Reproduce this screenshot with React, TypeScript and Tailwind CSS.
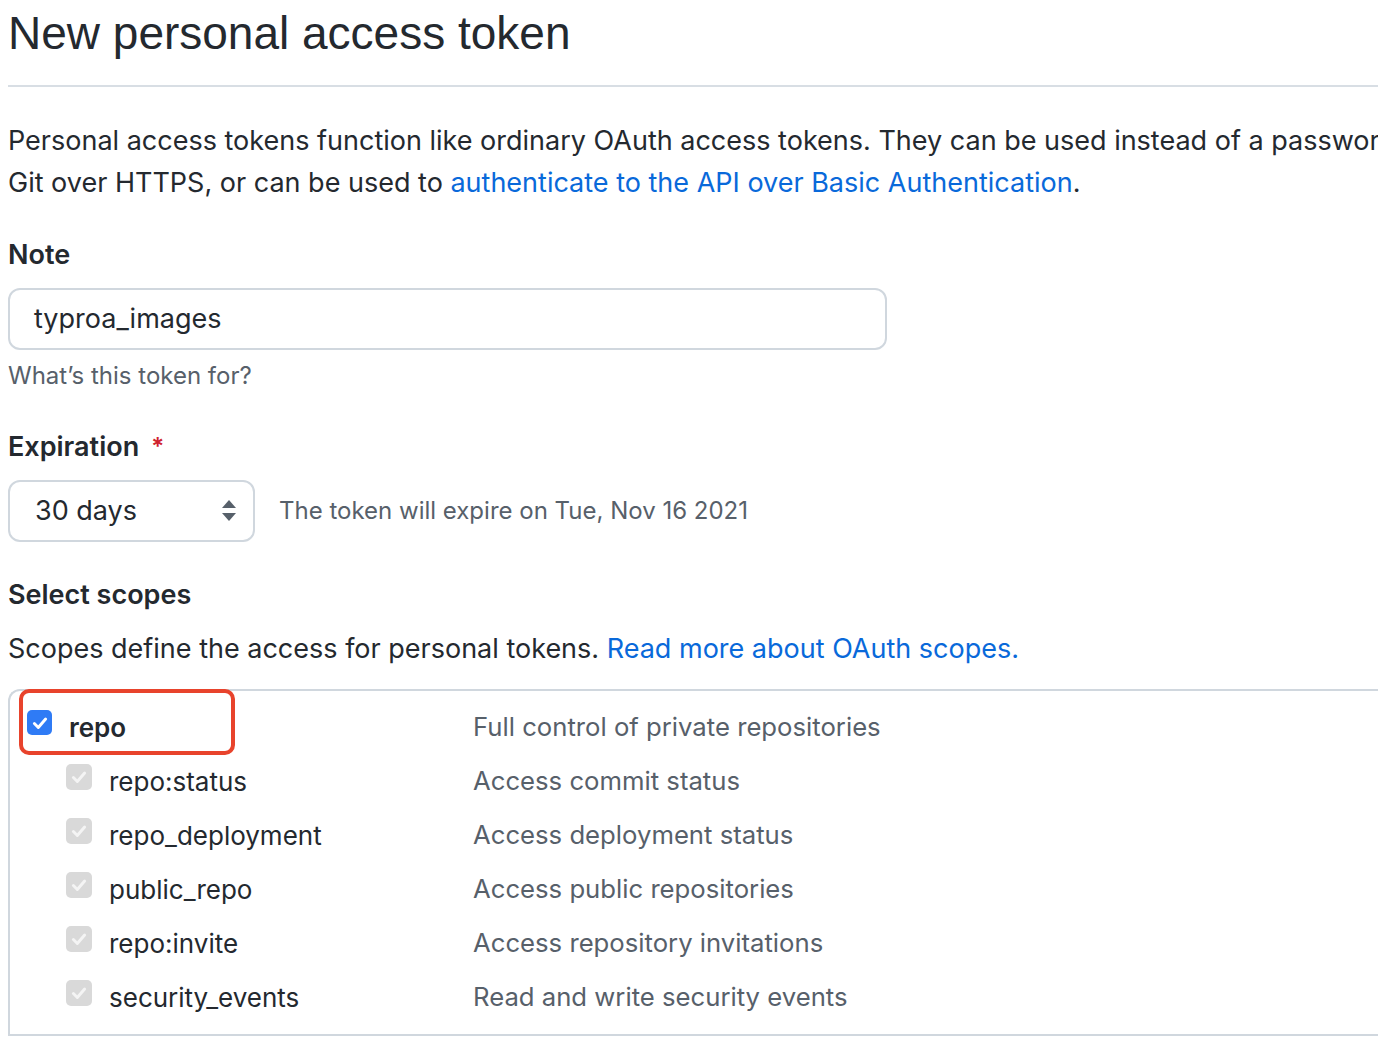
import React from "react";

const Check = ({ color = "white" }: { color?: string }) => (
  <svg viewBox="0 0 16 16" className="w-[18px] h-[18px]">
    <path d="M3 8.5 L6.5 12 L13 4.5" fill="none" stroke={color} strokeWidth="2.6" strokeLinecap="round" strokeLinejoin="round" />
  </svg>
);

const sub = [
  ["repo:status", "Access commit status"],
  ["repo_deployment", "Access deployment status"],
  ["public_repo", "Access public repositories"],
  ["repo:invite", "Access repository invitations"],
  ["security_events", "Read and write security events"],
];

export default function App() {
  return (
    <div className="w-[1378px] h-[1042px] overflow-hidden bg-white text-[#24292f] pl-[8px]" style={{ fontFamily: "Inter, 'Noto Sans', sans-serif" }}>
      <div className="h-[87px] border-b-2 border-[#d8dee4] w-[1370px]">
        <h1 className="text-[46px] leading-[66px] font-normal" style={{ fontFamily: "'Liberation Sans', Arial, sans-serif" }}>
          New personal access token
        </h1>
      </div>
      <p className="mt-[33px] text-[27px] leading-[42px] whitespace-nowrap">
        Personal access tokens function like ordinary OAuth access tokens. They can be used instead of a password for
        <br />
        Git over HTTPS, or can be used to <span className="text-[#0969da]">authenticate to the API over Basic Authentication</span>.
      </p>
      <div className="mt-[30px] text-[27px] leading-[42px] font-semibold">Note</div>
      <div className="mt-[12px] w-[879px] h-[62px] border-2 border-[#d0d7de] rounded-[12px] flex items-center pl-[24px] text-[27px]">
        typroa_images
      </div>
      <div className="mt-[5px] text-[24px] leading-[42px] text-[#57606a]">What’s this token for?</div>
      <div className="mt-[29px] text-[27px] leading-[42px] font-semibold flex items-center">
        Expiration<span className="text-[#cf222e] ml-[12px] text-[24px]">*</span>
      </div>
      <div className="mt-[12px] flex items-center">
        <div className="w-[247px] h-[62px] border-2 border-[#d0d7de] rounded-[12px] flex items-center justify-between pl-[25px] pr-[16px] text-[27px]">
          <span>30 days</span>
          <svg viewBox="0 0 16 24" className="w-[16px] h-[24px]">
            <path d="M8 1 L15 9 L1 9 Z M1 14 L15 14 L8 22 Z" fill="#57606a" />
          </svg>
        </div>
        <div className="ml-[24px] text-[24px] text-[#57606a]">The token will expire on Tue, Nov 16 2021</div>
      </div>
      <div className="mt-[32px] text-[27px] leading-[42px] font-semibold">Select scopes</div>
      <div className="mt-[12px] text-[27px] leading-[42px]">
        Scopes define the access for personal tokens. <span className="text-[#0969da]">Read more about OAuth scopes.</span>
      </div>
      <div className="relative mt-[19px] w-[1370px] border-t-2 border-l-2 border-b-2 border-[#d0d7de] rounded-tl-[12px] pt-[9px] pb-[10px]">
        <div className="absolute left-[9px] top-[-2px] w-[216px] h-[66px] border-[4px] border-[#e8432c] rounded-[10px]" />
        <div className="h-[54px] grid grid-cols-[463px_1fr] items-center">
          <div className="flex items-center pl-[17px]">
            <div className="w-[25px] h-[25px] rounded-[5px] bg-[#2f7bf5] flex items-center justify-center -mt-[9px]">
              <Check />
            </div>
            <span className="ml-[17px] text-[26px] font-semibold">repo</span>
          </div>
          <div className="text-[25.7px] text-[#57606a]">Full control of private repositories</div>
        </div>
        {sub.map(([l, d]) => (
          <div key={l} className="h-[54px] grid grid-cols-[463px_1fr] items-center">
            <div className="flex items-center pl-[56px]">
              <div className="w-[26px] h-[26px] rounded-[5px] bg-[#d9d9d9] flex items-center justify-center -mt-[8px]">
                <Check color="#f4f4f4" />
              </div>
              <span className="ml-[17px] text-[26px]">{l}</span>
            </div>
            <div className="text-[25.7px] text-[#57606a]">{d}</div>
          </div>
        ))}
      </div>
    </div>
  );
}
